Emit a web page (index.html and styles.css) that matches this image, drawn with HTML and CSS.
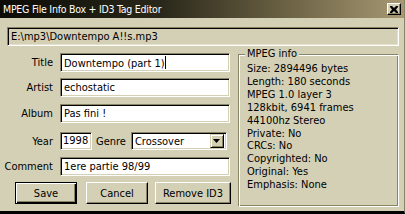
FILE: index.html
```html
<!DOCTYPE html>
<html lang="en">
<head>
    <meta charset="UTF-8">
    <title>MPEG File Info Box + ID3 Tag Editor</title>
    <link rel="stylesheet" href="styles.css">
</head>
<body>
    <div class="window">
        <div class="titlebar">
            <span class="caption">MPEG File Info Box + ID3 Tag Editor</span>
            <span class="close-btn">
                <svg width="8" height="7" viewBox="0 0 8 7">
                    <path d="M0 0h2l2 2 2-2h2v1l-2 2.5 2 2.5v1h-2l-2-2-2 2h-2v-1l2-2.5-2-2.5z" fill="#000"/>
                </svg>
            </span>
        </div>
        <div class="body">
            <div class="path-field">E:\mp3\Downtempo A!!s.mp3</div>
            <div class="main">
                <!-- tag form -->
                <div class="tag-form">
                    <div class="row row-title">
                        <label>Title</label>
                        <div class="field">Downtempo (part 1)<span class="caret"></span></div>
                    </div>
                    <div class="row row-artist">
                        <label>Artist</label>
                        <div class="field">echostatic</div>
                    </div>
                    <div class="row row-album">
                        <label>Album</label>
                        <div class="field">Pas fini !</div>
                    </div>
                    <div class="row row-year">
                        <label>Year</label>
                        <div class="year-line">
                            <div class="field year">1998</div>
                            <span class="genre-label">Genre</span>
                            <div class="field select">
                                <span class="select-text">Crossover</span>
                                <span class="drop-btn">
                                    <svg width="7" height="4" viewBox="0 0 7 4"><path d="M0 0h7l-3.5 4z" fill="#000"/></svg>
                                </span>
                            </div>
                        </div>
                    </div>
                    <div class="row row-comment">
                        <label>Comment</label>
                        <div class="field">1ere partie 98/99</div>
                    </div>
                    <div class="buttons">
                        <button class="btn default">Save</button>
                        <button class="btn">Cancel</button>
                        <button class="btn wide">Remove ID3</button>
                    </div>
                </div>

                <!-- mpeg info -->
                <div class="groupbox">
                    <span class="legend">MPEG info</span>
                    <ul class="info-list">
                        <li>Size: 2894496 bytes</li>
                        <li>Length: 180 seconds</li>
                        <li>MPEG 1.0 layer 3</li>
                        <li>128kbit, 6941 frames</li>
                        <li>44100hz Stereo</li>
                        <li>Private: No</li>
                        <li>CRCs: No</li>
                        <li>Copyrighted: No</li>
                        <li>Original: Yes</li>
                        <li>Emphasis: None</li>
                    </ul>
                </div>
            </div>
        </div>
    </div>
</body>
</html>
```

FILE: styles.css
```css
body {
    margin: 0;
    padding: 0;
    font-family: "DejaVu Sans Condensed", "DejaVu Sans", sans-serif;
    font-stretch: condensed;
    font-size: 11px;
    color: #000;
    background: #d4d0b6;
}
.window {
    width: 405px;
    height: 214px;
    box-sizing: border-box;
    background: #d4d0b6;
    border-right: 1px solid #8a8466;
    border-bottom: 3px solid #000;
    overflow: hidden;
}
.titlebar {
    height: 18px;
    display: flex;
    align-items: center;
    justify-content: space-between;
    padding: 0 3px 0 3px;
    background: linear-gradient(to right, #0c0c06 0%, #2a281a 40%, #6e6446 72%, #a69872 100%);
    color: #fff;
}
.caption {
    font-size: 10.5px;
    letter-spacing: -0.25px;
}
.close-btn {
    width: 14px;
    height: 12px;
    box-sizing: border-box;
    background: #d4d0b6;
    border: 1px solid;
    border-color: #fff #000 #000 #fff;
    box-shadow: inset -1px -1px 0 #8a8466;
    display: flex;
    align-items: center;
    justify-content: center;
}
.body {
    padding: 9px 5px 0 7px;
}
.path-field {
    height: 19px;
    box-sizing: border-box;
    border: 1px solid;
    border-color: #8a8466 #fff #fff #8a8466;
    box-shadow: inset 1px 1px 0 #000, inset -1px -1px 0 #e4e0ca;
    padding: 2px 3px;
    line-height: 14px;
}
.main {
    display: flex;
    margin-top: 5px;
}
.tag-form {
    width: 225px;
    padding-left: 1px;
}
.row {
    display: flex;
    align-items: center;
    height: 19px;
}
.row label {
    width: 45px;
    text-align: right;
    margin-right: 7px;
    white-space: nowrap;
    display: flex;
    justify-content: flex-end;
}
.row-title { margin-top: 2px; }
.row-artist { margin-top: 6px; }
.row-album { margin-top: 7px; }
.row-year { margin-top: 9px; height: 18px; }
.row-comment { margin-top: 7px; }
.field {
    width: 170px;
    height: 19px;
    box-sizing: border-box;
    background: #fff;
    border: 1px solid;
    border-color: #8a8466 #fff #fff #8a8466;
    box-shadow: inset 1px 1px 0 #000, inset -1px -1px 0 #d4d0b6;
    padding: 2px 3px;
    line-height: 14px;
    white-space: nowrap;
    overflow: hidden;
}
.caret {
    display: inline-block;
    width: 1px;
    height: 13px;
    background: #000;
    vertical-align: -2px;
}
.year-line {
    display: flex;
    align-items: center;
}
.field.year {
    width: 32px;
    height: 18px;
    padding: 1px 2px;
}
.genre-label {
    margin: 0 5px 0 4px;
}
.field.select {
    width: 96px;
    height: 18px;
    display: flex;
    justify-content: space-between;
    padding: 2px 2px 2px 3px;
}
.select-text {
    line-height: 14px;
}
.drop-btn {
    width: 14px;
    height: 14px;
    box-sizing: border-box;
    margin-top: -1px;
    background: #d4d0b6;
    border: 1px solid;
    border-color: #d4d0b6 #000 #000 #d4d0b6;
    box-shadow: inset 1px 1px 0 #fff, inset -1px -1px 0 #8a8466;
    display: flex;
    align-items: center;
    justify-content: center;
}
.buttons {
    display: flex;
    margin-top: 6px;
    padding-left: 7px;
}
.btn {
    font-family: inherit;
    font-stretch: inherit;
    font-size: 11px;
    height: 22px;
    width: 62px;
    margin-right: 8px;
    padding: 0;
    background: #d4d0b6;
    border: 1px solid;
    border-color: #fff #000 #000 #fff;
    box-shadow: inset -1px -1px 0 #8a8466;
    color: #000;
}
.btn.default {
    margin-right: 9px;
    border: 1px solid #000;
    box-shadow: inset 1px 1px 0 #fff, inset -1px -1px 0 #000, inset -2px -2px 0 #8a8466;
}
.btn.wide {
    width: 76px;
    margin-right: 0;
    margin-left: -1px;
}
.groupbox {
    position: relative;
    width: 161px;
    height: 153px;
    box-sizing: border-box;
    margin-top: 3px;
    margin-left: 5px;
    border: 1px solid;
    border-color: #8a8466 #fff #fff #8a8466;
    box-shadow: inset 1px 1px 0 #fff, inset -1px -1px 0 #8a8466;
}
.legend {
    position: absolute;
    top: -8px;
    left: 6px;
    padding: 0 2px;
    background: #d4d0b6;
    line-height: 14px;
}
.info-list {
    list-style: none;
    margin: 0;
    padding: 8px 0 0 8px;
}
.info-list li {
    line-height: 12.9px;
    white-space: nowrap;
}
```
